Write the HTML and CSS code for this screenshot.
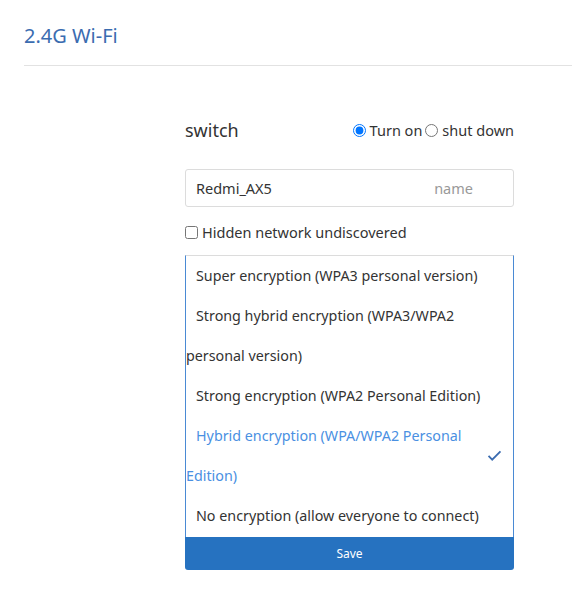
FILE: index.html
```html
<!DOCTYPE html>
<html lang="en">
<head>
  <meta charset="UTF-8">
  <meta name="viewport" content="width=device-width, initial-scale=1.0">
  <title>2.4G Wi-Fi</title>
  <link rel="stylesheet" href="styles.css">
</head>
<body>
  <!-- Section header -->
  <div class="section-head">
    <h2>2.4G Wi-Fi</h2>
  </div>

  <div class="form">
    <div class="row switch-row">
      <span class="label">switch</span>
      <div class="radios">
        <label><input type="radio" name="power" checked> Turn on</label>
        <label><input type="radio" name="power"> shut down</label>
      </div>
    </div>

    <div class="field">
      <span class="value">Redmi_AX5</span>
      <span class="hint">name</span>
    </div>

    <label class="hidden-check"><input type="checkbox"> Hidden network undiscovered</label>

    <!-- Encryption dropdown (open) -->
    <div class="dropdown">
      <ul class="options">
        <li>Super encryption (WPA3 personal version)</li>
        <li>Strong hybrid encryption (WPA3/WPA2 personal version)</li>
        <li>Strong encryption (WPA2 Personal Edition)</li>
        <li class="selected">Hybrid encryption (WPA/WPA2 Personal Edition)
          <svg class="check" viewBox="0 0 16 12">
            <path d="M1.5 6.5l4 4 9-9"></path>
          </svg>
        </li>
        <li>No encryption (allow everyone to connect)</li>
      </ul>
      <button class="save">Save</button>
    </div>
  </div>
</body>
</html>
```
FILE: styles.css
```css
body {
  font-family: "Noto Sans", "Liberation Sans", sans-serif;
  margin: 0;
  padding: 0;
  background: #fff;
  color: #333;
}
.section-head {
  margin-left: 24px;
  border-bottom: 1px solid #e2e2e2;
  height: 66px;
  box-sizing: border-box;
}
.section-head h2 {
  margin: 0;
  padding-top: 23px;
  font-size: 20px;
  font-weight: normal;
  line-height: 26px;
  color: #3b6cb0;
}
.form {
  width: 329px;
  margin-left: 185px;
  padding-top: 49px;
}
.row {
  display: flex;
  align-items: center;
  justify-content: space-between;
}
.switch-row {
  height: 30px;
}
.label {
  font-size: 18px;
  color: #333;
}
.radios {
  display: flex;
  gap: 3px;
  font-size: 14.5px;
}
.radios label {
  display: flex;
  align-items: center;
}
.radios input {
  margin: 0 4px 0 0;
  width: 13px;
  height: 13px;
}
.field {
  margin-top: 24px;
  height: 38px;
  box-sizing: border-box;
  border: 1px solid #dcdcdc;
  border-radius: 3px;
  display: flex;
  align-items: center;
  justify-content: space-between;
  padding: 0 40px 0 10px;
  font-size: 14.5px;
}
.hint {
  color: #999;
}
.hidden-check {
  display: flex;
  align-items: center;
  margin-top: 17px;
  font-size: 14.5px;
  height: 16px;
}
.hidden-check input {
  margin: 0 4px 0 0;
  width: 13px;
  height: 13px;
}
.dropdown {
  margin-top: 15px;
}
.options {
  list-style: none;
  margin: 0;
  padding: 0 0 1px 0;
  border: 1px solid #4a8ad4;
  border-top-color: #dcdcdc;
  border-bottom: none;
}
.options li {
  position: relative;
  font-size: 14.3px;
  line-height: 40px;
  text-indent: 10px;
  padding-right: 16px;
}
.options li.selected {
  color: #4a90e2;
}
.check {
  position: absolute;
  right: 11px;
  top: 50%;
  width: 15px;
  height: 11px;
  margin-top: -6px;
  fill: none;
  stroke: #3b6cb0;
  stroke-width: 2;
}
.save {
  display: block;
  width: 100%;
  height: 33px;
  border: none;
  border-radius: 0 0 3px 3px;
  background: #2672c0;
  color: white;
  font-family: inherit;
  font-size: 12px;
  cursor: pointer;
}
.save:hover {
  background: #1f63a8;
}
```
